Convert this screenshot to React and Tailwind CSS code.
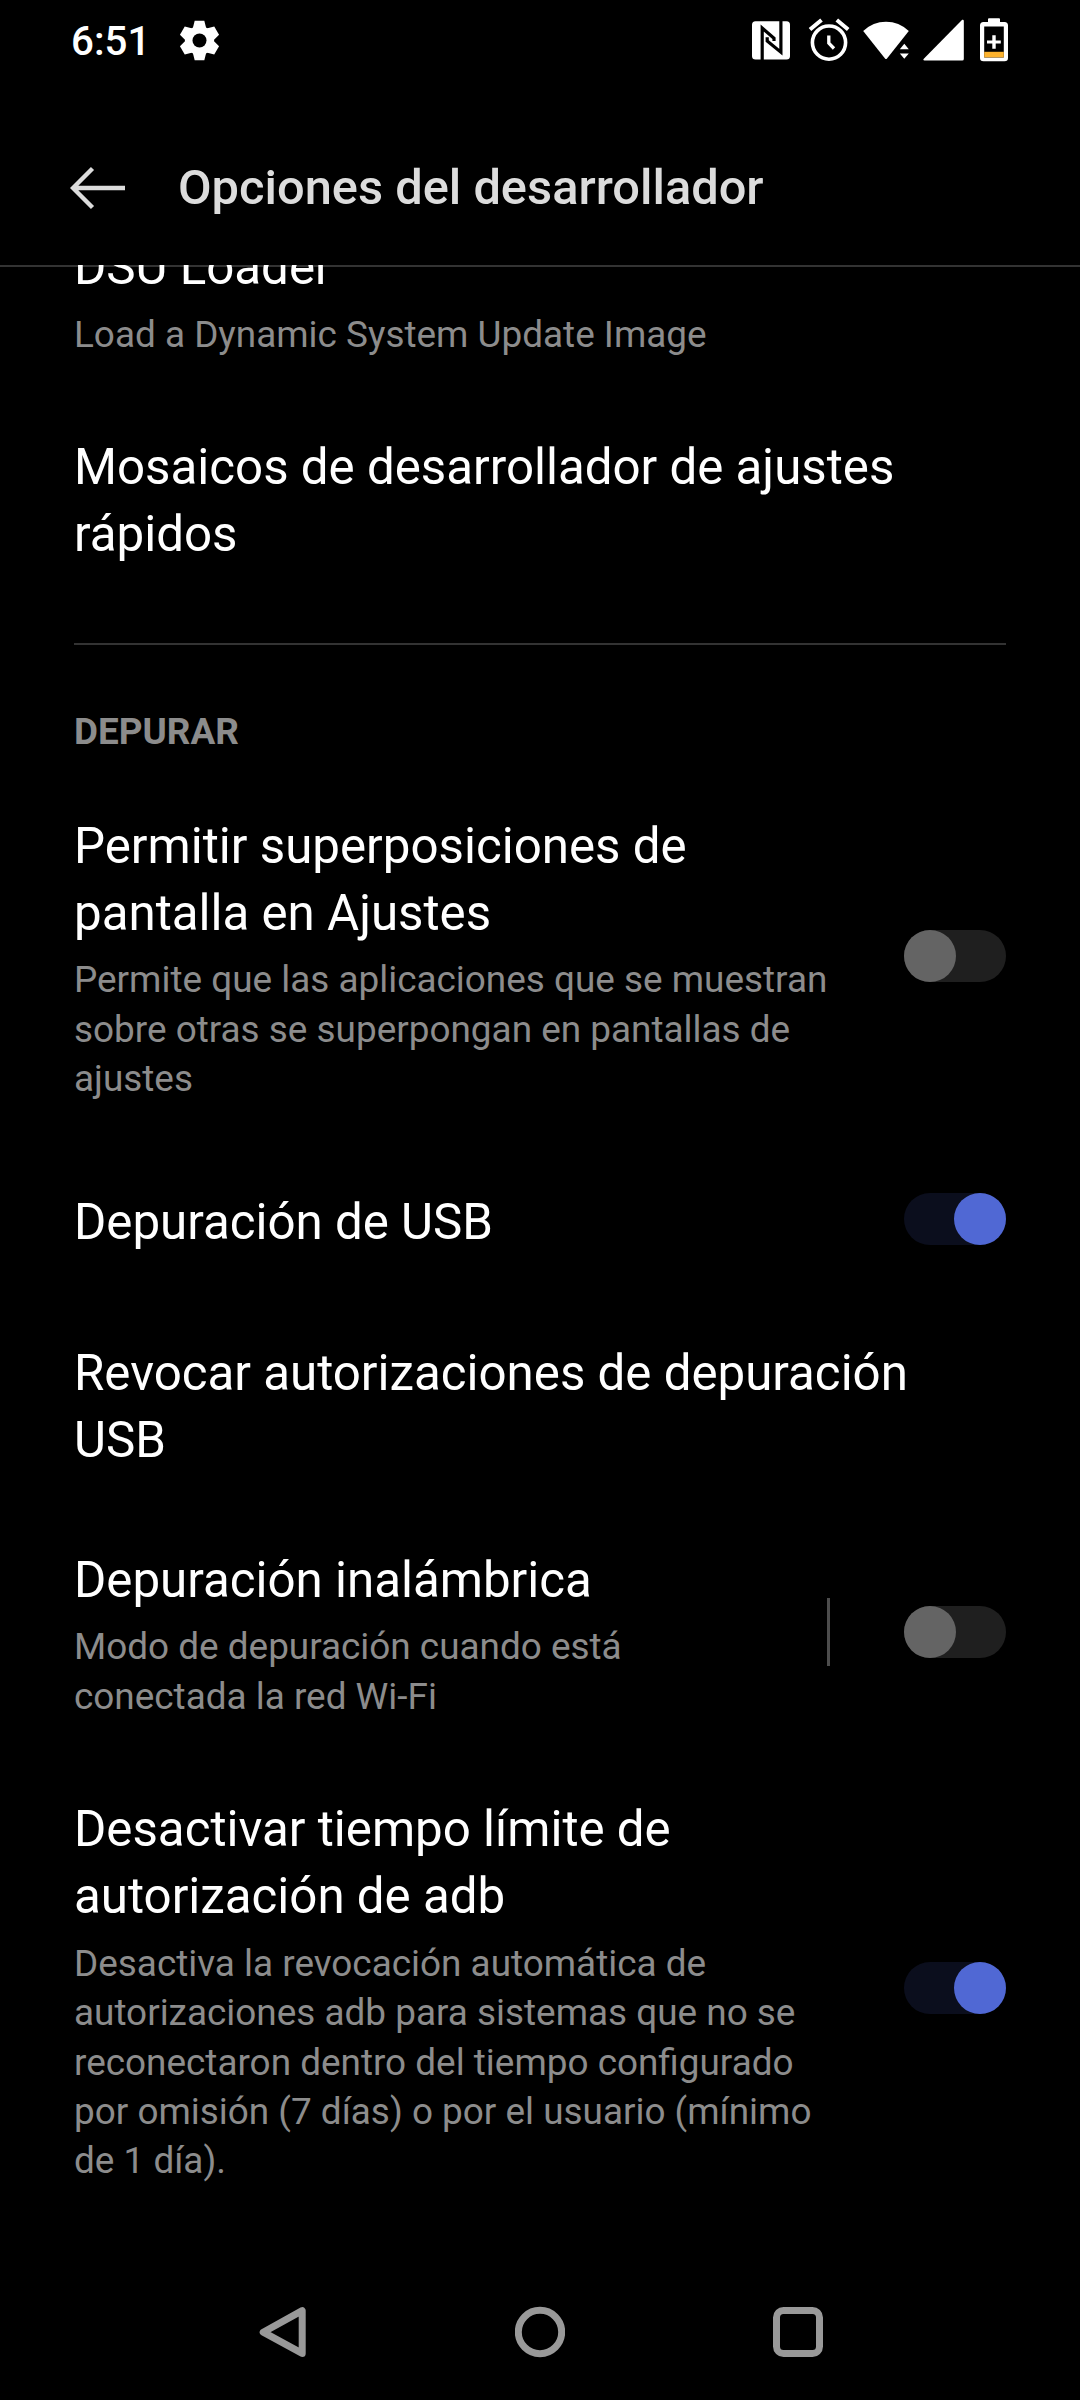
function StatusBar() {
  return (
    <div className="flex h-[80px] shrink-0 items-start justify-between pl-[71px] pr-[70px]">
      <div className="flex items-start">
        <span className="w-[105px] pt-[18px] text-[40.3px] leading-[48px] font-medium text-white">6:51</span>
        <svg className="ml-[3px] mt-[20px]" width="41" height="41" viewBox="-20.5 -20.5 41 41" fill="#fff">
          <circle r="14.6" />
          <path d="M-4.8-19.8H4.8L6.8-12V12L4.8 19.8H-4.8L-6.8 12V-12Z" />
          <path d="M-4.8-19.8H4.8L6.8-12V12L4.8 19.8H-4.8L-6.8 12V-12Z" transform="rotate(60)" />
          <path d="M-4.8-19.8H4.8L6.8-12V12L4.8 19.8H-4.8L-6.8 12V-12Z" transform="rotate(120)" />
          <circle r="7" fill="#000" />
        </svg>
      </div>
      <svg width="260" height="66" viewBox="750 0 260 66" fill="#fff">
        <rect x="752" y="21.2" width="38" height="38.2" rx="3.5" />
        <g fill="none" stroke="#000" strokeWidth="3.2">
          <path d="M762.2 60V28L774 38.2V41" />
          <path d="M767.2 37.2V41L780.9 52.2V21" />
        </g>
        <g fill="none" stroke="#fff" strokeWidth="3.6">
          <circle cx="829" cy="42.6" r="16.6" />
          <path d="M828.8 35.5V43.2L834 48.5" strokeWidth="3.3" />
          <path d="M810 29.5L821.5 20M836.8 20L848.2 29.5" strokeWidth="4" />
        </g>
        <path d="M863.2 31Q873 21.8 886 21.8T908.8 31L887 58.6Q886 59.6 885 58.6Z" />
        <path d="M899.8 49.2L904.3 43.8L908.8 49.2ZM899.8 53.4H908.8L904.3 58.8Z" />
        <path d="M962.2 19.8Q963.8 19.2 963.8 21V59Q963.8 60.6 962.2 60.6H924.5Q922.6 60.4 923.8 58.8Z" />
        <path fillRule="evenodd" d="M989 18.3H999Q1000 18.3 1000 19.3V22H1004.5Q1008 22 1008 25.5V58Q1008 61.3 1004.5 61.3H983.5Q980 61.3 980 58V25.5Q980 22 983.5 22H988V19.3Q988 18.3 989 18.3ZM984.2 26.6V57.4H1003.8V26.6Z" />
        <path d="M984.2 51.8H1003.8V57.4H984.2Z" fill="#fcb22e" />
        <path d="M992.3 35.2H995.7V40.4H1000.8V43.6H995.7V48.8H992.3V43.6H987V40.4H992.3Z" />
      </svg>
    </div>
  );
}

function Header() {
  return (
    <div className="flex h-[185px] shrink-0 items-start pl-[70px]">
      <svg className="mt-[86px]" width="56" height="44" viewBox="0 0 56 44" fill="none" stroke="#dcdcdc" strokeWidth="4.4">
        <path d="M55 22H4M22.5 2.5L3 22L22.5 41.5" />
      </svg>
      <h1 className="ml-[52px] mt-[75px] text-[48.8px] leading-[66px] font-medium text-[#dcdcdc]">Opciones del desarrollador</h1>
    </div>
  );
}

function Toggle({ on }) {
  return (
    <div
      className={
        on
          ? "mb-[5px] flex h-[52px] w-[102px] shrink-0 justify-end rounded-full bg-[#0b0e1d]"
          : "mb-[3px] flex h-[52px] w-[102px] shrink-0 justify-start rounded-full bg-[#1f1f1f]"
      }
    >
      <div className={on ? "size-[52px] rounded-full bg-[#5068d4]" : "size-[52px] rounded-full bg-[#646464]"} />
    </div>
  );
}

function Item({ title, summary, toggle, separator, height, width }) {
  return (
    <div className={`flex shrink-0 items-center justify-between pl-[74px] pr-[74px] ${height}`}>
      <div className={`pt-[1px] ${width}`}>
        <div className="text-[49.25px] leading-[67px] text-white">{title}</div>
        {summary && <div className="mt-[8.6px] text-[36.9px] leading-[49.4px] text-[#8c8c8c]">{summary}</div>}
      </div>
      {toggle && (
        <div className="flex items-center">
          {separator && <div className="mb-[3px] mr-[74px] h-[68px] w-[3px] bg-[#4d4d4d]" />}
          <Toggle on={toggle === "on"} />
        </div>
      )}
    </div>
  );
}

export default function App() {
  return (
    <div className="flex h-[2400px] w-[1080px] flex-col overflow-hidden bg-black font-['Roboto',sans-serif]">
      <StatusBar />
      <Header />
      <div className="flex h-[1995px] shrink-0 flex-col overflow-hidden">
        <div className="h-[2px] shrink-0 bg-[#333333]" />
        <div className="-mt-[71px] flex flex-col">
          <Item title="DSU Loader" summary="Load a Dynamic System Update Image" height="h-[200px]" width="w-[900px]" />
          <Item title="Mosaicos de desarrollador de ajustes rápidos" height="h-[208px]" width="w-[900px]" />
          <div className="mx-[74px] mt-[39px] h-[2px] bg-[#333333]" />
          <div className="h-[130px] px-[74px] pt-[62px] text-[36.9px] leading-[49px] font-bold text-[#8c8c8c]">DEPURAR</div>
          <Item
            title="Permitir superposiciones de pantalla en Ajustes"
            summary="Permite que las aplicaciones que se muestran sobre otras se superpongan en pantallas de ajustes"
            toggle="off"
            height="h-[365px]"
            width="w-[770px]"
          />
          <Item title="Depuración de USB" toggle="on" height="h-[163px]" width="w-[770px]" />
          <Item title="Revocar autorizaciones de depuración USB" height="h-[206px]" width="w-[900px]" />
          <Item
            title="Depuración inalámbrica"
            summary="Modo de depuración cuando está conectada la red Wi-Fi"
            toggle="off"
            separator
            height="h-[249px]"
            width="w-[650px]"
          />
          <Item
            title="Desactivar tiempo límite de autorización de adb"
            summary="Desactiva la revocación automática de autorizaciones adb para sistemas que no se reconectaron dentro del tiempo configurado por omisión (7 días) o por el usuario (mínimo de 1 día)."
            toggle="on"
            height="h-[465px]"
            width="w-[765px]"
          />
        </div>
      </div>
      <div className="flex h-[140px] shrink-0 items-start justify-between pl-[259px] pr-[257px] pt-[46px]">
        <svg width="48" height="52" viewBox="0 0 48 52" fill="none" stroke="#999" strokeWidth="7" strokeLinejoin="round">
          <path d="M43.2 4.6V47.4L4.2 26.2Z" />
        </svg>
        <svg width="50" height="52" viewBox="0 0 50 52" fill="none" stroke="#999" strokeWidth="7">
          <circle cx="25" cy="26" r="21.7" />
        </svg>
        <svg width="50" height="52" viewBox="0 0 50 52" fill="none" stroke="#999" strokeWidth="7">
          <rect x="3.5" y="4.5" width="43" height="43" rx="7" />
        </svg>
      </div>
    </div>
  );
}
